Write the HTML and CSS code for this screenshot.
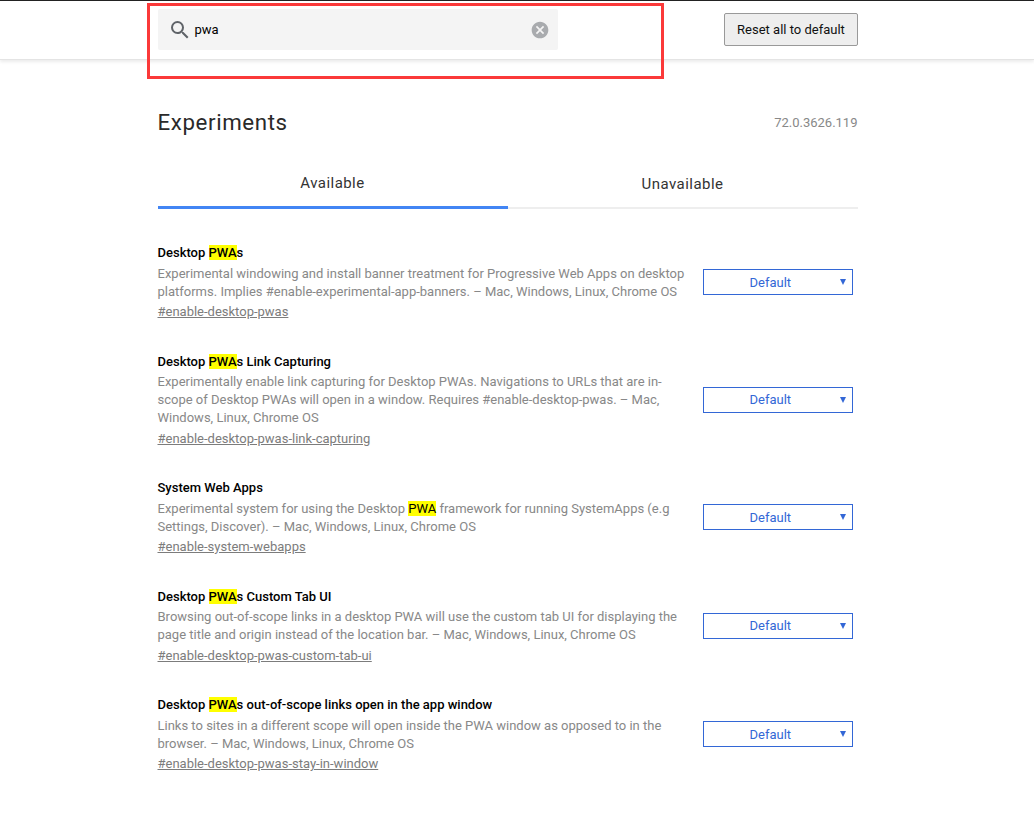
FILE: index.html
```html
<!DOCTYPE html>
<html lang="en">
<head>
<meta charset="utf-8">
<title>Experiments</title>
<link rel="stylesheet" href="styles.css">
</head>
<body>
<header class="toolbar">
  <div class="toolbar-inner">
    <div class="search">
      <svg class="search-icon" width="24" height="24" viewBox="0 0 24 24"><path d="M15.5 14h-.79l-.28-.27A6.47 6.47 0 0 0 16 9.5 6.5 6.5 0 1 0 9.5 16c1.61 0 3.09-.59 4.23-1.57l.27.28v.79l5 4.99L20.49 19l-4.99-5zm-6 0C7.01 14 5 11.99 5 9.5S7.01 5 9.5 5 14 7.01 14 9.5 11.99 14 9.5 14z"/></svg>
      <span class="query">pwa</span>
      <svg class="clear-icon" width="20" height="20" viewBox="0 0 24 24"><path d="M12 2C6.47 2 2 6.47 2 12s4.47 10 10 10 10-4.47 10-10S17.53 2 12 2zm5 13.59L15.59 17 12 13.41 8.41 17 7 15.59 10.59 12 7 8.41 8.41 7 12 10.59 15.59 7 17 8.41 13.41 12 17 15.59z"/></svg>
    </div>
    <button class="reset">Reset all to default</button>
  </div>
  <div class="marker"></div>
</header>
<main class="content">
  <div class="heading"><h1>Experiments</h1><span class="version">72.0.3626.119</span></div>
  <nav class="tabs"><div class="tab selected">Available</div><div class="tab">Unavailable</div></nav>
  <div class="list">
  <section class="item">
    <div class="info"><h2>Desktop <mark>PWA</mark>s</h2>
    <p>Experimental windowing and install banner treatment for Progressive Web Apps on desktop<br>platforms. Implies #enable-experimental-app-banners. – Mac, Windows, Linux, Chrome OS</p>
    <a>#enable-desktop-pwas</a></div>
    <div class="select"><span>Default</span><i class="arrow"></i></div>
  </section>
  <section class="item">
    <div class="info"><h2>Desktop <mark>PWA</mark>s Link Capturing</h2>
    <p>Experimentally enable link capturing for Desktop PWAs. Navigations to URLs that are in-<br>scope of Desktop PWAs will open in a window. Requires #enable-desktop-pwas. – Mac,<br>Windows, Linux, Chrome OS</p>
    <a>#enable-desktop-pwas-link-capturing</a></div>
    <div class="select"><span>Default</span><i class="arrow"></i></div>
  </section>
  <section class="item">
    <div class="info"><h2>System Web Apps</h2>
    <p>Experimental system for using the Desktop <mark>PWA</mark> framework for running SystemApps (e.g<br>Settings, Discover). – Mac, Windows, Linux, Chrome OS</p>
    <a>#enable-system-webapps</a></div>
    <div class="select"><span>Default</span><i class="arrow"></i></div>
  </section>
  <section class="item">
    <div class="info"><h2>Desktop <mark>PWA</mark>s Custom Tab UI</h2>
    <p>Browsing out-of-scope links in a desktop PWA will use the custom tab UI for displaying the<br>page title and origin instead of the location bar. – Mac, Windows, Linux, Chrome OS</p>
    <a>#enable-desktop-pwas-custom-tab-ui</a></div>
    <div class="select"><span>Default</span><i class="arrow"></i></div>
  </section>
  <section class="item">
    <div class="info"><h2>Desktop <mark>PWA</mark>s out-of-scope links open in the app window</h2>
    <p>Links to sites in a different scope will open inside the PWA window as opposed to in the<br>browser. – Mac, Windows, Linux, Chrome OS</p>
    <a>#enable-desktop-pwas-stay-in-window</a></div>
    <div class="select"><span>Default</span><i class="arrow"></i></div>
  </section>
  </div>
</main>
</body>
</html>
```

FILE: styles.css
```css
* { box-sizing: border-box; }
body { margin: 0; height: 817px; overflow: hidden; background: #fff; font-family: Roboto, sans-serif; font-size: 13px; color: #000; }
.toolbar { position: relative; height: 60px; border-top: 1px solid #222; border-bottom: 1px solid #e4e4e4; box-shadow: 0 2px 3px rgba(0,0,0,.08); }
.toolbar-inner { width: 700px; margin-left: 158px; padding-top: 8px; display: flex; justify-content: space-between; align-items: flex-start; }
.search { width: 400px; height: 41px; background: #f4f4f4; display: flex; align-items: center; padding: 0 8px 0 10px; border-radius: 2px; }
.search-icon { fill: #5f6368; }
.query { margin-left: 2.5px; flex: 1; }
.clear-icon { fill: #a9abae; }
.reset { width: 134px; height: 33px; margin-top: 4px; padding: 0; font: 13px Roboto, sans-serif; color: #111; background: #eee; border: 1px solid #999; border-radius: 2px; white-space: nowrap; }
.marker { position: absolute; left: 147px; top: 2px; width: 517px; height: 76px; border: 3px solid #fb3939; }
.content { width: 700px; margin-left: 158px; padding-top: 47px; }
.heading { display: flex; justify-content: space-between; align-items: center; height: 30px; }
.heading h1 { margin: 0 0 0 -.5px; font-size: 22.3px; letter-spacing: .6px; font-weight: 400; color: #2a2a2a; }
.version { margin-right: .5px; color: #888; }
.tabs { display: flex; margin-top: 21px; }
.tab { flex: 1; height: 51px; padding: 1px 1px 0 0; line-height: 50px; text-align: center; font-size: 15px; letter-spacing: .45px; color: #333; border-bottom: 2px solid #eee; }
.tab.selected { padding-top: 0; border-bottom: 3px solid #4285f4; }
.list { display: flex; flex-direction: column; gap: 30.5px; padding-top: 34.1px; }
.item { display: flex; justify-content: space-between; align-items: center; padding-right: 5px; }
.info { margin-left: -.5px; }
.info h2 { margin: 0; font-size: 13px; font-weight: 500; line-height: 20px; }
.info p { margin: 1.6px 0 0; line-height: 18px; color: #888; white-space: nowrap; }
.info a { display: block; margin-top: 2.4px; line-height: 18px; color: #7c7c7c; text-decoration: underline; }
mark { background: #ff0; color: #000; }
.select { width: 150px; height: 26px; border: 1px solid #3367d6; color: #3367d6; display: flex; align-items: center; padding: 0 6px 0 45.5px; justify-content: space-between; }
.arrow { width: 0; border: 3px solid transparent; border-top: 6px solid #3367d6; border-bottom: 0; }
```
